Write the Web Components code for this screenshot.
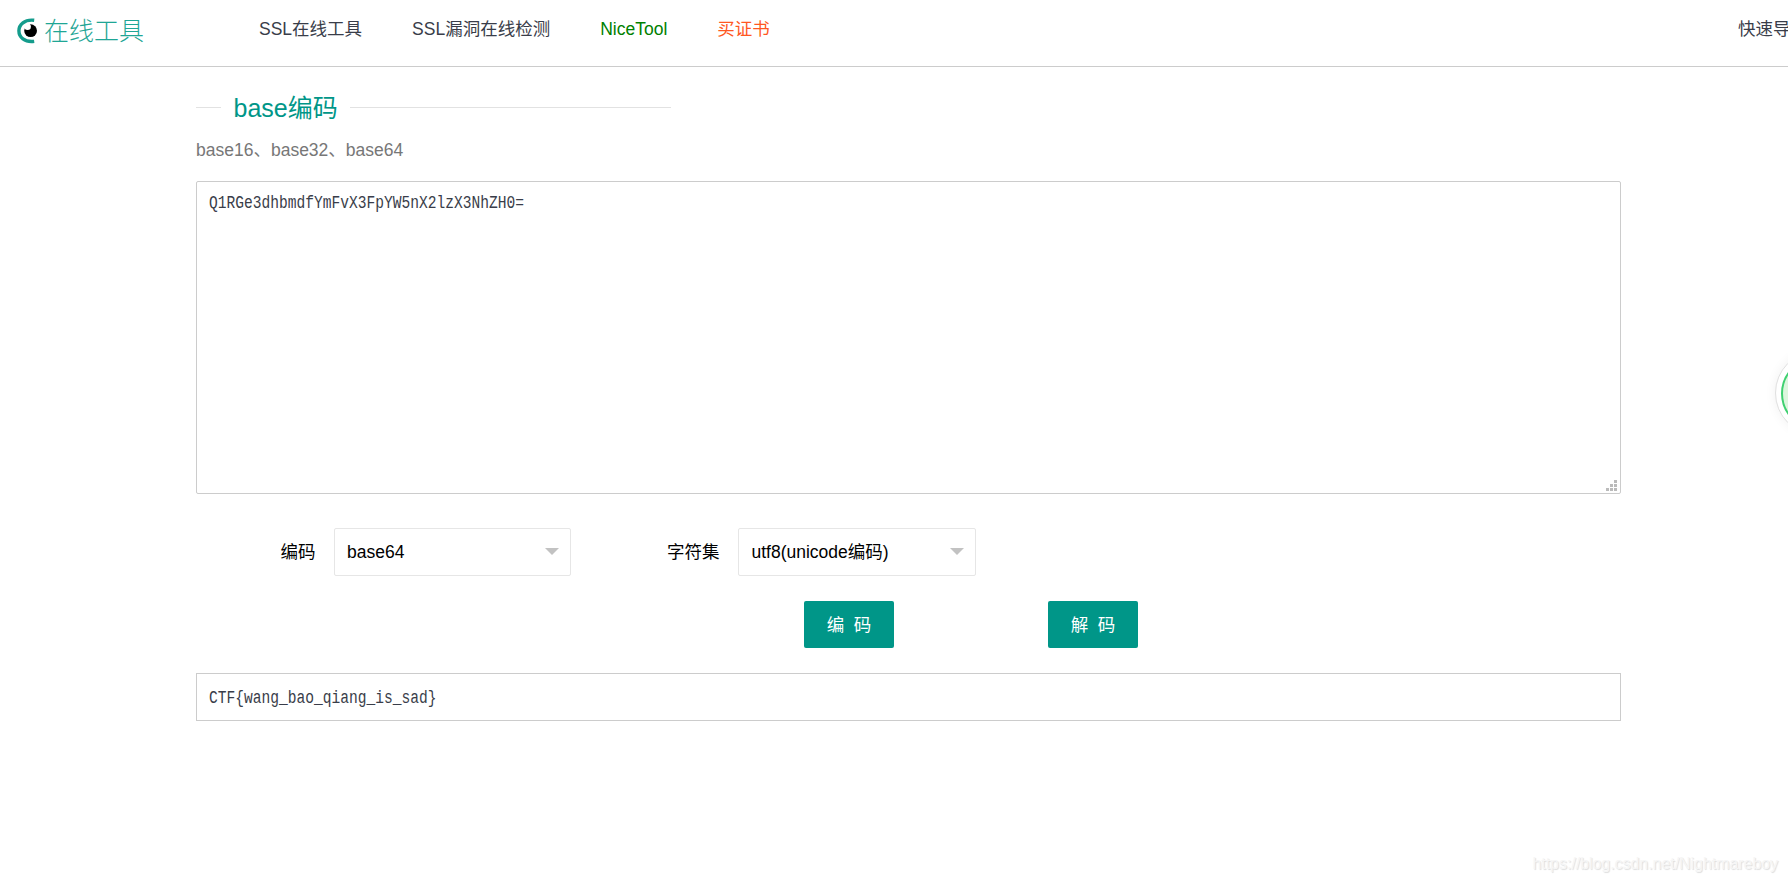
<!DOCTYPE html>
<html lang="zh-CN">
<head>
<meta charset="utf-8">
<title>base编码 - 在线工具</title>
<style>
  html, body { margin: 0; height: 100%; overflow: hidden; background: #fff; }
  body { font: 17.5px/30px "Liberation Sans", "Noto Sans CJK SC", sans-serif; color: #393d49; }
</style>
</head>
<body>
<tool-page>
  <site-header slot="header">
    <nav-link>SSL在线工具</nav-link>
    <nav-link>SSL漏洞在线检测</nav-link>
    <nav-link color="#008000">NiceTool</nav-link>
    <nav-link color="#ff5722">买证书</nav-link>
    <nav-link slot="right">快速导</nav-link>
  </site-header>
  <title-field>base编码</title-field>
  <tool-note>base16、base32、base64</tool-note>
  <code-box resizable>Q1RGe3dhbmdfYmFvX3FpYW5nX2lzX3NhZH0=</code-box>
  <form-row>
    <select-field label="编码">base64</select-field>
    <select-field label="字符集">utf8(unicode编码)</select-field>
  </form-row>
  <button-row>
    <tool-button>编&nbsp;&nbsp;码</tool-button>
    <tool-button>解&nbsp;&nbsp;码</tool-button>
  </button-row>
  <code-box>CTF{wang_bao_qiang_is_sad}</code-box>
  <float-ball slot="overlay"></float-ball>
  <page-mark slot="overlay">https://blog.csdn.net/Nightmareboy</page-mark>
</tool-page>

<script>
class BaseElement extends HTMLElement {
  constructor() {
    super();
    this.attachShadow({ mode: 'open' });
  }

  connectedCallback() {
    this.shadowRoot.innerHTML = this.render();
  }
}

class ToolPage extends BaseElement {
  render() {
    return `
      <style>
        :host { display: block; position: relative; height: 100vh; overflow: hidden; }
        main { width: 1425px; margin-left: 196px; padding-top: 26px; display: flex; flex-direction: column; }
      </style>
      <slot name="header"></slot>
      <main><slot></slot></main>
      <slot name="overlay"></slot>
    `;
  }
}

class SiteHeader extends BaseElement {
  render() {
    return `
      <style>
        :host { display: flex; box-sizing: border-box; height: 67px; padding-left: 17px; border-bottom: 1px solid #ccc; }
        .logo { display: flex; width: 242px; height: 62px; align-items: center; flex: none; color: #1fa695; font-size: 25px; font-weight: 300; }
        .logo svg { margin-right: 7px; }
        nav { display: flex; gap: 50px; flex: 1; }
        .right { flex: none; width: 50px; white-space: nowrap; }
      </style>
      <div class="logo">
        <svg width="20" height="26" viewBox="0 0 20 26">
          <path d="M17.2 2.3C7.500 1.200 1.900 6.500 1.900 12.800s5.600 11.800 15.300 10.600" fill="none" stroke="#149c8c" stroke-width="3.400"/>
          <circle cx="13.600" cy="12.700" r="6.400" fill="#000"/>
          <circle cx="10.600" cy="8.800" r="3.300" fill="#fff"/>
        </svg>
        <span>在线工具</span>
      </div>
      <nav><slot></slot></nav>
      <div class="right"><slot name="right"></slot></div>
    `;
  }
}

class NavLink extends BaseElement {
  render() {
    return `
      <style>
        :host { display: block; line-height: 59px; white-space: nowrap; color: ${this.getAttribute('color') || '#393d49'}; }
      </style>
      <slot></slot>
    `;
  }
}

class TitleField extends BaseElement {
  render() {
    return `
      <style>
        :host { display: flex; align-items: center; width: 475px; height: 30px; font-size: 25px; color: #009688; white-space: nowrap; }
        i { height: 1px; margin-bottom: 2px; background: #e2e2e2; }
        .before { width: 25px; }
        .after { flex: 1; }
        span { padding: 0 12.5px; }
      </style>
      <i class="before"></i><span><slot></slot></span><i class="after"></i>
    `;
  }
}

class ToolNote extends BaseElement {
  render() {
    return `
      <style>
        :host { display: block; margin: 12px 0 16px; color: #777; }
      </style>
      <slot></slot>
    `;
  }
}

class CodeBox extends BaseElement {
  render() {
    const resizable = this.hasAttribute('resizable');
    // the mono face is condensed to half an em per character
    return `
      <style>
        :host {
          display: flex; box-sizing: border-box; position: relative; padding: 0 12px; border: 1px solid #ccc;
          height: ${resizable ? '313px' : '48px'};
          padding-top: ${resizable ? '6px' : '9px'};
          border-radius: ${resizable ? '2px' : '0'};
          color: #393d49;
        }
        span { font-family: "Liberation Mono", monospace; font-size: 17.5px; transform: scaleX(.8333); transform-origin: 0 0; }
        svg { position: absolute; right: 3px; bottom: 2px; }
      </style>
      <span><slot></slot></span>
      ${resizable ? `
        <svg width="11" height="11" viewBox="0 0 11 11" fill="#bbb">
          <path d="M8 0h3v3H8zM4 4h3v3H4zM8 4h3v3H8zM0 8h3v3H0zM4 8h3v3H4zM8 8h3v3H8z"/>
        </svg>` : ''}
    `;
  }
}

class FormRow extends BaseElement {
  render() {
    return `
      <style>
        :host { display: flex; margin-top: 34px; }
      </style>
      <slot></slot>
    `;
  }
}

class SelectField extends BaseElement {
  render() {
    return `
      <style>
        :host { display: flex; color: #000; line-height: 48px; white-space: nowrap; }
        label { box-sizing: border-box; width: 138px; padding-right: 18.500px; text-align: right; }
        :host(:last-child) label { width: 167px; }
        .select { display: flex; box-sizing: border-box; width: 237px; height: 48px; padding: 0 11px 0 12px; align-items: center; justify-content: space-between; border: 1px solid #e6e6e6; border-radius: 2px; }
        :host(:last-child) .select { width: 238px; padding-left: 12.500px; }
        .arrow { margin-bottom: 2px; border: 7px solid transparent; border-top-color: #c2c2c2; border-bottom: 0; }
      </style>
      <label>${this.getAttribute('label')}</label>
      <div class="select"><span><slot></slot></span><i class="arrow"></i></div>
    `;
  }
}

class ButtonRow extends BaseElement {
  render() {
    return `
      <style>
        :host { display: flex; gap: 154px; margin: 25px 0; padding-left: 608px; }
      </style>
      <slot></slot>
    `;
  }
}

class ToolButton extends BaseElement {
  render() {
    return `
      <style>
        :host { display: block; width: 90px; height: 47px; }
        button { display: block; width: 100%; height: 100%; padding: 0; border: 0; border-radius: 2px; background: #009688; color: #fff; font: inherit; white-space: nowrap; }
      </style>
      <button><slot></slot></button>
    `;
  }
}

class FloatBall extends BaseElement {
  render() {
    return `
      <style>
        :host { position: absolute; left: 1775px; top: 351px; box-sizing: border-box; width: 84px; height: 84px; padding: 4.5px; border: 1px solid #e0e0e0; border-radius: 50%; background: #fff; box-shadow: 0 0 12px rgba(0, 0, 0, .06); }
        div { box-sizing: border-box; height: 100%; border: 2px solid #3fd070; border-radius: 50%; background: #dcf6dd; }
      </style>
      <div></div>
    `;
  }
}

class PageMark extends BaseElement {
  render() {
    return `
      <style>
        :host { position: absolute; right: 10px; bottom: 3px; font-size: 15.9px; color: #f6f6f6; text-shadow: 1px 1px 1px #ddd; }
      </style>
      <slot></slot>
    `;
  }
}

customElements.define('tool-page', ToolPage);
customElements.define('site-header', SiteHeader);
customElements.define('nav-link', NavLink);
customElements.define('title-field', TitleField);
customElements.define('tool-note', ToolNote);
customElements.define('code-box', CodeBox);
customElements.define('form-row', FormRow);
customElements.define('select-field', SelectField);
customElements.define('button-row', ButtonRow);
customElements.define('tool-button', ToolButton);
customElements.define('float-ball', FloatBall);
customElements.define('page-mark', PageMark);
</script>
</body>
</html>
